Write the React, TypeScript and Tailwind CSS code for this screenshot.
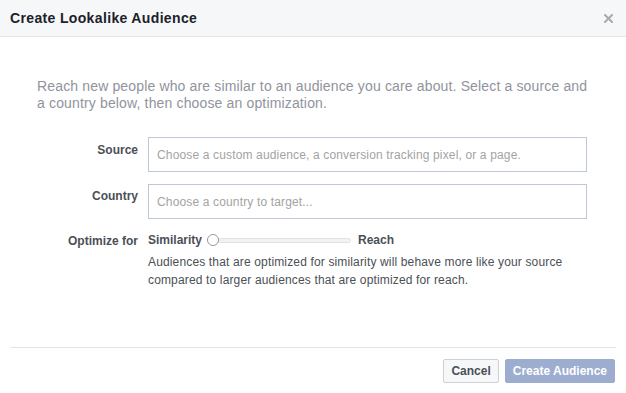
import React from "react";

export default function App() {
  return (
    <div
      className="w-[626px] h-[393px] bg-white flex flex-col overflow-hidden tracking-[0.15px]"
      style={{ fontFamily: '"Liberation Sans", Arial, sans-serif' }}
    >
      <div className="h-[37px] bg-[#f6f7f9] border-b border-[#e5e5e5] flex items-center justify-between pl-[10px] pr-[13px] shrink-0">
        <span className="text-[14px] font-bold text-[#1d2129] leading-[18px] tracking-[0.35px]">Create Lookalike Audience</span>
        <svg width="9" height="9" viewBox="0 0 9 9" className="mt-[1px]">
          <path d="M1 1 L8 8 M8 1 L1 8" stroke="#a8abb1" strokeWidth="2" strokeLinecap="square" />
        </svg>
      </div>

      <div className="pt-[41px] pl-[37px] pr-[20px]">
        <p className="text-[14px] leading-[17px] text-[#90949c]">
          Reach new people who are similar to an audience you care about. Select a source and
          <br />
          a country below, then choose an optimization.
        </p>
      </div>

      <div className="pl-[37px] pr-[39px] mt-[25px] flex flex-col gap-[12px]">
        <div className="flex gap-[10px]">
          <div className="w-[101px] text-right text-[12px] font-bold text-[#4b4f56] leading-[16px] pt-[5px] tracking-normal">Source</div>
          <div className="flex-1 h-[35px] border border-[#bdc7d8] flex items-center px-[8px] text-[12px] text-[#a3a3a3]">
            Choose a custom audience, a conversion tracking pixel, or a page.
          </div>
        </div>
        <div className="flex gap-[10px]">
          <div className="w-[101px] text-right text-[12px] font-bold text-[#4b4f56] leading-[16px] pt-[4px] tracking-normal">Country</div>
          <div className="flex-1 h-[35px] border border-[#bdc7d8] flex items-center px-[8px] text-[12px] text-[#a3a3a3]">
            Choose a country to target...
          </div>
        </div>
        <div className="flex gap-[10px]">
          <div className="w-[101px] text-right text-[12px] font-bold text-[#4b4f56] leading-[16px] pt-[2px] tracking-normal">Optimize for</div>
          <div className="flex-1 flex flex-col">
            <div className="h-[18px] flex items-center tracking-normal">
              <span className="text-[12px] font-bold text-[#4b4f56]">Similarity</span>
              <div className="relative ml-[5px] w-[144px] h-[12px] flex items-center">
                <div className="w-full h-[5px] rounded-full bg-[#f2f2f2] border border-[#e3e3e3]" />
                <div className="absolute left-0 top-0 w-[12px] h-[12px] rounded-full bg-white border border-[#9a9a9a]" />
              </div>
              <span className="ml-[7px] text-[12px] font-bold text-[#4b4f56]">Reach</span>
            </div>
            <p className="mt-[4px] text-[12px] leading-[18px] text-[#4b4f56]">
              Audiences that are optimized for similarity will behave more like your source
              <br />
              compared to larger audiences that are optimized for reach.
            </p>
          </div>
        </div>
      </div>

      <div className="mt-auto mx-[10px] border-t border-[#e5e5e5] mb-[11px]" />
      <div className="mb-[10px] flex justify-end gap-[6px] pr-[11px] tracking-normal">
        <button className="h-[24px] px-[7px] bg-[#f6f7f9] border border-[#ced0d4] rounded-[2px] text-[12px] font-bold text-[#4b4f56]">
          Cancel
        </button>
        <button className="h-[24px] px-[7px] bg-[#9cadcf] border border-[#9cadcf] rounded-[2px] text-[12px] font-bold text-white">
          Create Audience
        </button>
      </div>
    </div>
  );
}
